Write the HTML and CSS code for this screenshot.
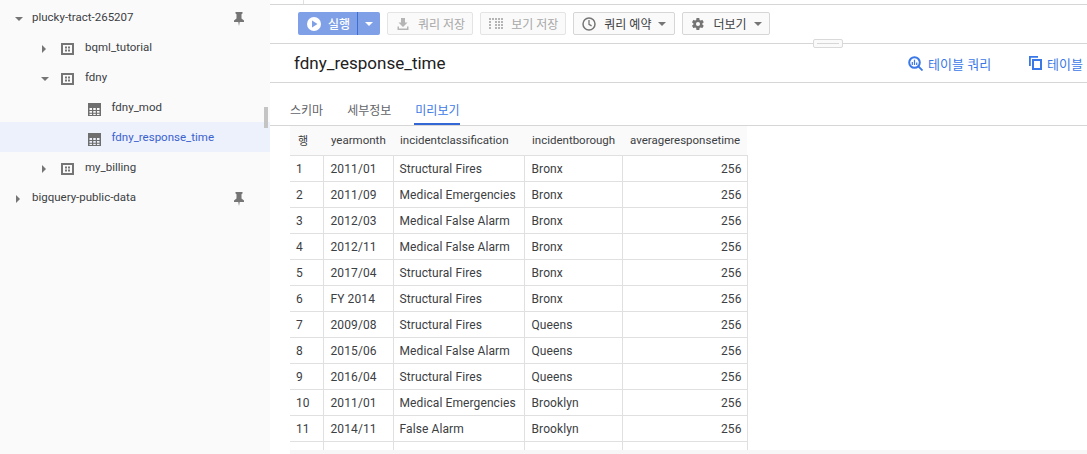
FILE: index.html
```html
<!DOCTYPE html>
<html lang="ko">
<head>
<meta charset="utf-8">
<title>fdny_response_time</title>
<link rel="stylesheet" href="styles.css">
</head>
<body>
<svg class="defs" width="0" height="0" aria-hidden="true">
  <symbol id="ds" viewBox="0 0 13 12"><path fill-rule="evenodd" d="M0 0h13v12H0zM2 2v8h9V2z" fill="#757575"/><path d="M4 3.500h2v2H4zM7 3.500h2v2H7zM4 6.500h2v2H4zM7 6.500h2v2H7z" fill="#757575"/></symbol>
  <symbol id="tb" viewBox="0 0 13 13"><path fill-rule="evenodd" d="M0 0h13v13H0zM1.500 5v2h2.500V5zM5.250 5v2h2.500V5zM9 5v2h2.500V5zM1.500 8v1.750h2.500V8zM5.250 8v1.750h2.500V8zM9 8v1.750h2.500V8zM1.500 10.750v1.250h2.500v-1.250zM5.250 10.750v1.250h2.500v-1.250zM9 10.750v1.250h2.500v-1.250z" fill="#6e6e6e"/></symbol>
  <symbol id="pin" viewBox="0 0 10 14"><path d="M1.500 0h7v1.500L7.500 2.200v4.300L10 8.500V10H5.700L5 14l-.7-4H0V8.500l2.500-2V2.200l-1-.7z" fill="#757575"/></symbol>
</svg>
<div class="page">
  <aside class="sidebar">
    <div class="thumb" aria-hidden="true"></div>
    <div class="node lvl0"><span class="caret down"></span><span class="name">plucky-tract-265207</span><svg class="pin"><use href="#pin"/></svg></div>
    <div class="node lvl1"><span class="caret right"></span><svg class="ico"><use href="#ds"/></svg><span class="name">bqml_tutorial</span></div>
    <div class="node lvl1"><span class="caret down"></span><svg class="ico"><use href="#ds"/></svg><span class="name">fdny</span></div>
    <div class="node lvl2"><svg class="ico tbl"><use href="#tb"/></svg><span class="name">fdny_mod</span></div>
    <div class="node lvl2 selected"><svg class="ico tbl"><use href="#tb"/></svg><span class="name">fdny_response_time</span></div>
    <div class="node lvl1"><span class="caret right"></span><svg class="ico"><use href="#ds"/></svg><span class="name">my_billing</span></div>
    <div class="node lvl0"><span class="caret right"></span><span class="name">bigquery-public-data</span><svg class="pin"><use href="#pin"/></svg></div>
  </aside>
  <main class="main">
    <div class="topstrip"><div class="topstrip-cell"></div></div>
    <div class="toolbar">
      <div class="run">
        <span class="run-main">
          <svg viewBox="0 0 14 14" width="14" height="14"><circle cx="7" cy="7" r="7" fill="#fff"/><path d="M5 3.500v7L10.500 7z" fill="#7f9fe6"/></svg>
          <span>실행</span>
        </span>
        <span class="run-drop"><span class="caret-w"></span></span>
      </div>
      <div class="btn disabled">
        <svg width="14" height="14" viewBox="0 0 14 14"><path d="M5 1h4v4.500h2.500L7 10 2.500 5.500H5z" fill="#b5b5b5"/><path d="M1.500 9.500H3v2h8v-2h1.500V13h-11z" fill="#b5b5b5"/></svg>
        <span>쿼리 저장</span>
      </div>
      <div class="btn disabled">
        <svg width="14" height="14" viewBox="0 0 14 14"><g fill="#b5b5b5"><path d="M0 1h2v2H0zM3 1h2v2H3zM6 1h2v2H6zM9 1h2v2H9zM12 1h2v2h-2zM0 4h2v2H0zM6 4h2v2H6zM9 4h2v2H9zM12 4h2v2h-2zM0 7h2v2H0zM6 7h2v2H6zM9 7h2v2H9zM12 7h2v2h-2zM0 10h2v2H0zM6 10h2v2H6zM12 10h2v2h-2zM9 10h2v2H9z"/></g></svg>
        <span>보기 저장</span>
      </div>
      <div class="btn">
        <svg width="14" height="14" viewBox="0 0 14 14"><circle cx="7" cy="7" r="6" fill="none" stroke="#757575" stroke-width="1.500"/><path d="M7 3v4.300l2.600 1.600" fill="none" stroke="#757575" stroke-width="1.300"/></svg>
        <span>쿼리 예약</span>
        <span class="caret-g"></span>
      </div>
      <div class="btn more">
        <svg width="14" height="14" viewBox="0 0 24 24"><path fill="#757575" d="M19.400 13c.04-.33.06-.66.06-1s-.02-.67-.06-1l2.150-1.680a.5.500 0 0 0 .12-.64l-2.040-3.530a.5.500 0 0 0-.62-.22l-2.540 1.020a7.400 7.400 0 0 0-1.720-1l-.38-2.700a.5.500 0 0 0-.5-.43h-4.080a.5.500 0 0 0-.5.430l-.38 2.700c-.62.260-1.200.600-1.720 1L4.590 4.930a.5.500 0 0 0-.62.220L1.930 8.680a.5.500 0 0 0 .12.640L4.200 11a8 8 0 0 0 0 2l-2.150 1.680a.5.500 0 0 0-.12.640l2.040 3.530c.13.220.39.300.62.220l2.540-1.020c.52.400 1.100.740 1.720 1l.38 2.700c.04.250.25.430.5.430h4.080c.25 0 .46-.18.500-.43l.38-2.700c.62-.26 1.200-.6 1.720-1l2.540 1.020c.23.080.49 0 .62-.22l2.040-3.530a.5.500 0 0 0-.12-.64zM12 15.500a3.500 3.500 0 1 1 0-7 3.500 3.500 0 0 1 0 7z"/></svg>
        <span>더보기</span>
        <span class="caret-g"></span>
      </div>
    </div>
    <div class="titlebar">
      <div class="handle" aria-hidden="true"></div>
      <h1 class="title">fdny_response_time</h1>
      <div class="actions">
        <span class="action">
          <svg width="15" height="15" viewBox="0 0 15 15"><circle cx="6.500" cy="6.500" r="5.300" fill="none" stroke="#3b78e7" stroke-width="2"/><path d="M10.500 10.500l4 4" stroke="#3b78e7" stroke-width="1.800"/><path d="M3.700 6h1.200v3H3.700zM5.900 3.800h1.200v5.200H5.900zM8.100 6.500h1.200V9H8.100z" fill="#3b78e7"/></svg>
          <span>테이블 쿼리</span>
        </span>
        <span class="action">
          <svg width="13" height="14" viewBox="0 0 13 14"><path d="M0 0h9v1.800H1.800V10H0z" fill="#3b78e7"/><path fill-rule="evenodd" d="M3 3h10v11H3zM5 5v7h6V5z" fill="#3b78e7"/></svg>
          <span>테이블</span>
        </span>
      </div>
    </div>
    <div class="tabs">
      <span class="tab">스키마</span>
      <span class="tab">세부정보</span>
      <span class="tab active">미리보기</span>
    </div>
    <div class="table-wrap">
      <table class="grid">
        <colgroup><col class="c1"><col class="c2"><col class="c3"><col class="c4"><col class="c5"></colgroup>
        <thead>
          <tr><th>행</th><th>yearmonth</th><th>incidentclassification</th><th>incidentborough</th><th>averageresponsetime</th></tr>
        </thead>
        <tbody>
          <tr><td>1</td><td>2011/01</td><td>Structural Fires</td><td>Bronx</td><td class="num">256</td></tr>
          <tr><td>2</td><td>2011/09</td><td>Medical Emergencies</td><td>Bronx</td><td class="num">256</td></tr>
          <tr><td>3</td><td>2012/03</td><td>Medical False Alarm</td><td>Bronx</td><td class="num">256</td></tr>
          <tr><td>4</td><td>2012/11</td><td>Medical False Alarm</td><td>Bronx</td><td class="num">256</td></tr>
          <tr><td>5</td><td>2017/04</td><td>Structural Fires</td><td>Bronx</td><td class="num">256</td></tr>
          <tr><td>6</td><td>FY 2014</td><td>Structural Fires</td><td>Bronx</td><td class="num">256</td></tr>
          <tr><td>7</td><td>2009/08</td><td>Structural Fires</td><td>Queens</td><td class="num">256</td></tr>
          <tr><td>8</td><td>2015/06</td><td>Medical False Alarm</td><td>Queens</td><td class="num">256</td></tr>
          <tr><td>9</td><td>2016/04</td><td>Structural Fires</td><td>Queens</td><td class="num">256</td></tr>
          <tr><td>10</td><td>2011/01</td><td>Medical Emergencies</td><td>Brooklyn</td><td class="num">256</td></tr>
          <tr><td>11</td><td>2014/11</td><td>False Alarm</td><td>Brooklyn</td><td class="num">256</td></tr>
          <tr><td>&nbsp;</td><td></td><td></td><td></td><td class="num"></td></tr>
        </tbody>
      </table>
      <div class="hscroll" aria-hidden="true"></div>
    </div>
  </main>
</div>
</body>
</html>
```
FILE: styles.css
```css
html, body { margin: 0; padding: 0; height: 100%; overflow: hidden; background: #fff; }
body { font-family: Roboto, "Noto Sans CJK KR", sans-serif; font-size: 12px; color: #212121; }
.defs { position: absolute; }
.page { display: flex; width: 1087px; height: 454px; overflow: hidden; }

.sidebar { position: relative; width: 270px; flex: none; box-sizing: border-box; padding-top: 2px; background: #fafafa; }
.thumb { position: absolute; left: 264px; top: 107px; width: 4px; height: 21px; background: #c4c4c4; }
.node { display: flex; align-items: center; height: 30px; box-sizing: border-box; color: #3c4043; white-space: nowrap; }
.node.lvl0 { padding-left: 15px; }
.node.lvl1 { padding-left: 41px; }
.node.lvl2 { padding-left: 88px; }
.node.selected { background: #ecf1fb; color: #3b62d0; }
.name { font-size: 11.5px; }
.caret { width: 8px; height: 8px; margin-top: 3px; margin-right: 9px; flex: none; display: flex; align-items: center; justify-content: center; }
.caret::before { content: ""; border-style: solid; border-color: transparent; }
.caret.down::before { border-width: 4px 4px 0; border-top-color: #757575; }
.caret.right::before { border-width: 4px 0 4px 4px; border-left-color: #757575; margin-left: -2px; }
.lvl1 .caret { margin-right: 12px; }
.ico { width: 13px; height: 12px; margin-top: 4px; margin-right: 11px; flex: none; }
.ico.tbl { height: 13px; margin-top: 4px; margin-right: 10.5px; }
.pin { width: 10px; height: 14px; margin-top: 4px; margin-left: auto; margin-right: 26px; flex: none; }

.main { flex: 1; min-width: 0; display: flex; flex-direction: column; }
.topstrip { height: 4px; border-bottom: 1px solid #d6d6d6; flex: none; }
.topstrip-cell { width: 33px; height: 4px; border-right: 1px solid #e0e0e0; }
.toolbar { display: flex; align-items: center; gap: 7px; height: 39px; box-sizing: border-box; padding: 0 0 1px 28px; border-bottom: 1px solid #d6d6d6; flex: none; }
.run { display: flex; height: 23px; border-radius: 2px; background: #7f9fe6; color: #fff; font-weight: 500; overflow: hidden; }
.run-main { display: flex; align-items: center; gap: 7px; width: 59px; box-sizing: border-box; padding-left: 9px; }
.run-drop { width: 23px; box-sizing: border-box; display: flex; align-items: center; justify-content: center; border-left: 1px solid #3b6fd6; }
.caret-w { border-style: solid; border-width: 4px 4px 0; border-color: #fff transparent transparent; }
.btn { display: flex; align-items: center; gap: 8px; height: 23px; box-sizing: border-box; padding: 0 8px; border: 1px solid #d6d6d6; border-radius: 2px; background: #fafafa; color: #3c4043; white-space: nowrap; }
.btn.disabled { color: #a8a8a8; border-color: #e4e4e4; padding-right: 7px; }
.btn.more { padding-right: 7px; }
.caret-g { border-style: solid; border-width: 4px 4px 0; border-color: #757575 transparent transparent; margin-left: -1px; }

.titlebar { position: relative; display: flex; align-items: center; justify-content: space-between; height: 39px; box-sizing: border-box; padding-left: 24px; border-bottom: 1px solid #d6d6d6; flex: none; }
.handle { position: absolute; left: 543px; top: -5px; width: 30px; height: 9px; box-sizing: border-box; background: linear-gradient(#d6d6d6, #d6d6d6) center/22px 1px no-repeat #fafafa; border: 1px solid #d9d9d9; border-radius: 2px; }
.title { margin: 0; font-size: 17px; font-weight: 400; color: #212121; }
.actions { display: flex; gap: 38px; margin-right: 4px; color: #3b78e7; font-size: 13px; }
.action { display: flex; align-items: center; gap: 5px; white-space: nowrap; }

.tabs { display: flex; gap: 22px; height: 43px; box-sizing: border-box; padding-left: 19px; border-bottom: 1px solid #d6d6d6; flex: none; }
.tab { display: flex; align-items: center; height: 42px; box-sizing: border-box; padding: 10px 1px 0; color: #5f6368; }
.tab.active { color: #3b78e7; border-bottom: 2px solid #3367d6; padding-top: 12px; }

.table-wrap { position: relative; flex: 1; min-height: 0; overflow: hidden; padding-left: 20px; }
.grid { border-collapse: collapse; table-layout: fixed; width: 457px; color: #3c4043; }
.c1 { width: 33px; } .c2 { width: 70px; } .c3 { width: 131px; } .c4 { width: 98px; } .c5 { width: 125px; }
.grid th { height: 29px; box-sizing: border-box; padding: 0 5px 0 8px; background: #fafafa; font-weight: 400; font-size: 11.5px; text-align: left; white-space: nowrap; overflow: hidden; color: #3c4043; }
.grid th:first-child { padding-left: 8px; font-size: 11px; }
.grid th:nth-child(3) { padding-left: 7px; }
.grid td { height: 26px; box-sizing: border-box; padding: 1px 5px 0 7px; border: 1px solid #e0e0e0; letter-spacing: .1px; white-space: nowrap; overflow: hidden; }
.grid td:nth-child(3) { padding-left: 6px; }
.grid tr td:first-child { border-left: 0; padding-left: 6px; }
.grid .num { text-align: right; }
.hscroll { position: absolute; left: 20px; right: 0; bottom: 0; height: 4px; background: #f7f7f7; }
```
